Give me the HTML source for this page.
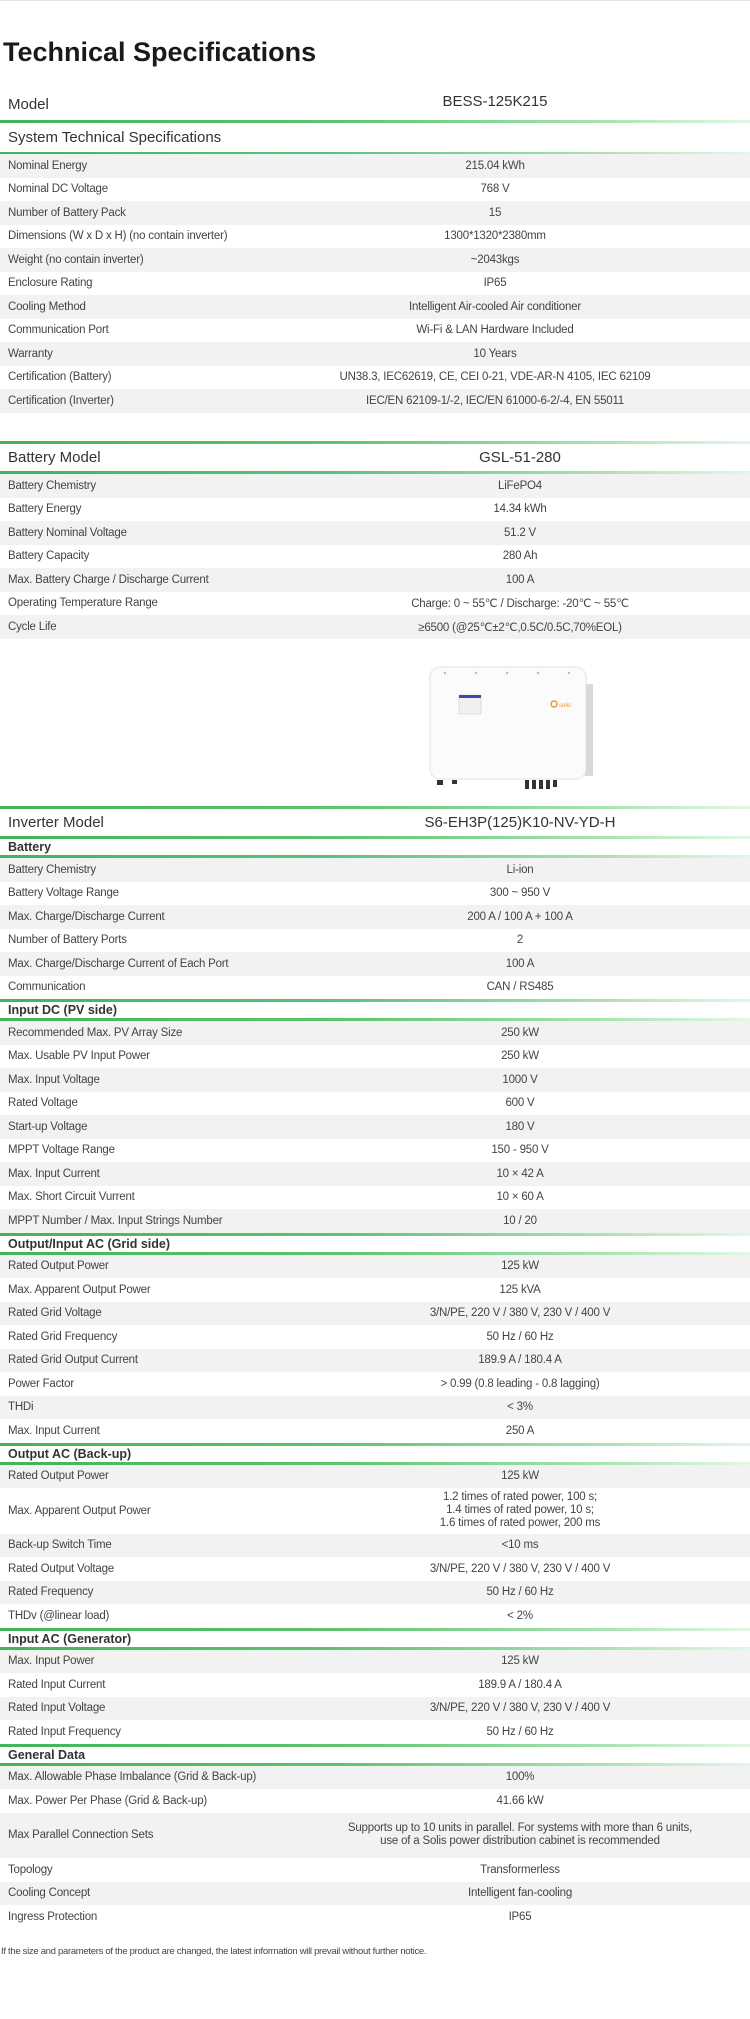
<!DOCTYPE html>
<html><head><meta charset="utf-8">
<style>
*{margin:0;padding:0;box-sizing:border-box}
body{width:750px;height:2019px;background:#fff;font-family:"Liberation Sans",Arial,sans-serif;color:#333;position:relative;overflow:hidden}
.topline{position:absolute;left:0;top:0;width:750px;height:1px;background:#e2e2e2}
h1{position:absolute;left:3px;top:37px;font-size:27px;font-weight:bold;color:#1a1a1a;letter-spacing:0}
.sec{position:absolute;left:0;width:750px}
.gl{height:3px;background:linear-gradient(to right,#45b35a 0%,#5cc46e 45%,#a8e3b0 80%,#e3f7e6 100%)}
.r{height:23.5px;display:flex;align-items:center;font-size:11.5px;color:#444;letter-spacing:-0.2px}
.r:nth-child(odd){background:#f2f2f2}
.r .l{padding-left:8px;width:290px;flex:none}
.r .v{flex:1;text-align:center;padding-right:0}
.s .r .l{width:262px}
.s .r .v{padding-right:22px}
.r.t{height:45.5px}
.r.t .v{line-height:13px}
.hb{height:16px;display:flex;align-items:center;padding-left:8px;font-size:12.5px;font-weight:bold;color:#333}
.hm{height:27px;display:flex;align-items:center;font-size:15px;color:#333}
.hm .l{padding-left:8px;width:290px}
.hm .v{flex:1;text-align:center}
.foot{position:absolute;left:1px;top:1946px;font-size:9.5px;color:#444;letter-spacing:-0.3px}
</style></head><body>
<div class="topline"></div>
<h1>Technical Specifications</h1>

<div class="sec" style="top:88px">
  <div class="hm" style="height:32px"><div class="l" style="width:262px">Model</div><div class="v" style="padding-right:22px;margin-top:-6px">BESS-125K215</div></div>
  <div class="gl"></div>
  <div class="hm" style="height:29px"><div class="l" style="width:300px">System Technical Specifications</div></div>
  <div class="gl"></div>
</div>
<div class="sec s" style="top:154px">
<div class="r"><div class="l">Nominal Energy</div><div class="v">215.04 kWh</div></div>
<div class="r"><div class="l">Nominal DC Voltage</div><div class="v">768 V</div></div>
<div class="r"><div class="l">Number of Battery Pack</div><div class="v">15</div></div>
<div class="r"><div class="l">Dimensions (W x D x H) (no contain inverter)</div><div class="v">1300*1320*2380mm</div></div>
<div class="r"><div class="l">Weight (no contain inverter)</div><div class="v">~2043kgs</div></div>
<div class="r"><div class="l">Enclosure Rating</div><div class="v">IP65</div></div>
<div class="r"><div class="l">Cooling Method</div><div class="v">Intelligent Air-cooled Air conditioner</div></div>
<div class="r"><div class="l">Communication Port</div><div class="v">Wi-Fi &amp; LAN Hardware Included</div></div>
<div class="r"><div class="l">Warranty</div><div class="v">10 Years</div></div>
<div class="r"><div class="l">Certification (Battery)</div><div class="v">UN38.3, IEC62619, CE, CEI 0-21, VDE-AR-N 4105, IEC 62109</div></div>
<div class="r"><div class="l">Certification (Inverter)</div><div class="v">IEC/EN 62109-1/-2, IEC/EN 61000-6-2/-4, EN 55011</div></div>
</div>

<div class="sec" style="top:441px">
  <div class="gl"></div>
  <div class="hm"><div class="l">Battery Model</div><div class="v">GSL-51-280</div></div>
  <div class="gl"></div>
  <div>
<div class="r"><div class="l">Battery Chemistry</div><div class="v">LiFePO4</div></div>
<div class="r"><div class="l">Battery Energy</div><div class="v">14.34 kWh</div></div>
<div class="r"><div class="l">Battery Nominal Voltage</div><div class="v">51.2 V</div></div>
<div class="r"><div class="l">Battery Capacity</div><div class="v">280 Ah</div></div>
<div class="r"><div class="l">Max. Battery Charge / Discharge Current</div><div class="v">100 A</div></div>
<div class="r"><div class="l">Operating Temperature Range</div><div class="v">Charge: 0 ~ 55℃ / Discharge: -20℃ ~ 55℃</div></div>
<div class="r"><div class="l">Cycle Life</div><div class="v">≥6500 (@25℃±2℃,0.5C/0.5C,70%EOL)</div></div>
  </div>
</div>

<svg style="position:absolute;left:425px;top:662px" width="175" height="135" viewBox="0 0 175 135">
  <rect x="160" y="22" width="8" height="92" fill="#d8d8d8"/>
  <rect x="5" y="5" width="156" height="112" rx="10" fill="#fbfbfb" stroke="#e2e2e2"/>
  <rect x="34" y="33" width="22" height="19" fill="#f0f0f0" stroke="#ccc" stroke-width="0.6"/>
  <rect x="34" y="33" width="22" height="3" fill="#3d4aa8"/>
  <circle cx="129" cy="42" r="3" fill="none" stroke="#e39a3a" stroke-width="1.4"/>
  <text x="134" y="45" font-size="6" fill="#e39a3a" font-family="Liberation Sans">solis</text>
  <g fill="#bbb"><circle cx="20" cy="11" r="1.2"/><circle cx="51" cy="11" r="1.2"/><circle cx="82" cy="11" r="1.2"/><circle cx="113" cy="11" r="1.2"/><circle cx="144" cy="11" r="1.2"/></g>
  <g fill="#333"><rect x="12" y="118" width="6" height="5"/><rect x="27" y="118" width="5" height="4"/><rect x="100" y="118" width="4" height="9"/><rect x="107" y="118" width="4" height="9"/><rect x="114" y="118" width="4" height="9"/><rect x="121" y="118" width="4" height="9"/><rect x="128" y="118" width="4" height="7"/></g>
</svg>

<div class="sec" style="top:806px">
  <div class="gl"></div>
  <div class="hm"><div class="l">Inverter Model</div><div class="v">S6-EH3P(125)K10-NV-YD-H</div></div>
  <div class="gl"></div>
  <div class="hb">Battery</div>
  <div class="gl"></div>
  <div>
<div class="r"><div class="l">Battery Chemistry</div><div class="v">Li-ion</div></div>
<div class="r"><div class="l">Battery Voltage Range</div><div class="v">300 ~ 950 V</div></div>
<div class="r"><div class="l">Max. Charge/Discharge Current</div><div class="v">200 A / 100 A + 100 A</div></div>
<div class="r"><div class="l">Number of Battery Ports</div><div class="v">2</div></div>
<div class="r"><div class="l">Max. Charge/Discharge Current of Each Port</div><div class="v">100 A</div></div>
<div class="r"><div class="l">Communication</div><div class="v">CAN / RS485</div></div>
  </div>
  <div class="gl"></div><div class="hb">Input DC (PV side)</div><div class="gl"></div>
  <div>
<div class="r"><div class="l">Recommended Max. PV Array Size</div><div class="v">250 kW</div></div>
<div class="r"><div class="l">Max. Usable PV Input Power</div><div class="v">250 kW</div></div>
<div class="r"><div class="l">Max. Input Voltage</div><div class="v">1000 V</div></div>
<div class="r"><div class="l">Rated Voltage</div><div class="v">600 V</div></div>
<div class="r"><div class="l">Start-up Voltage</div><div class="v">180 V</div></div>
<div class="r"><div class="l">MPPT Voltage Range</div><div class="v">150 - 950 V</div></div>
<div class="r"><div class="l">Max. Input Current</div><div class="v">10 × 42 A</div></div>
<div class="r"><div class="l">Max. Short Circuit Vurrent</div><div class="v">10 × 60 A</div></div>
<div class="r"><div class="l">MPPT Number / Max. Input Strings Number</div><div class="v">10 / 20</div></div>
  </div>
  <div class="gl"></div><div class="hb">Output/Input AC (Grid side)</div><div class="gl"></div>
  <div>
<div class="r"><div class="l">Rated Output Power</div><div class="v">125 kW</div></div>
<div class="r"><div class="l">Max. Apparent Output Power</div><div class="v">125 kVA</div></div>
<div class="r"><div class="l">Rated Grid Voltage</div><div class="v">3/N/PE, 220 V / 380 V, 230 V / 400 V</div></div>
<div class="r"><div class="l">Rated Grid Frequency</div><div class="v">50 Hz / 60 Hz</div></div>
<div class="r"><div class="l">Rated Grid Output Current</div><div class="v">189.9 A / 180.4 A</div></div>
<div class="r"><div class="l">Power Factor</div><div class="v">&gt; 0.99 (0.8 leading - 0.8 lagging)</div></div>
<div class="r"><div class="l">THDi</div><div class="v">&lt; 3%</div></div>
<div class="r"><div class="l">Max. Input Current</div><div class="v">250 A</div></div>
  </div>
  <div class="gl"></div><div class="hb">Output AC (Back-up)</div><div class="gl"></div>
  <div>
<div class="r"><div class="l">Rated Output Power</div><div class="v">125 kW</div></div>
<div class="r t"><div class="l">Max. Apparent Output Power</div><div class="v">1.2 times of rated power, 100 s;<br>1.4 times of rated power, 10 s;<br>1.6 times of rated power, 200 ms</div></div>
<div class="r"><div class="l">Back-up Switch Time</div><div class="v">&lt;10 ms</div></div>
<div class="r"><div class="l">Rated Output Voltage</div><div class="v">3/N/PE, 220 V / 380 V, 230 V / 400 V</div></div>
<div class="r"><div class="l">Rated Frequency</div><div class="v">50 Hz / 60 Hz</div></div>
<div class="r"><div class="l">THDv (@linear load)</div><div class="v">&lt; 2%</div></div>
  </div>
  <div class="gl"></div><div class="hb">Input AC (Generator)</div><div class="gl"></div>
  <div>
<div class="r"><div class="l">Max. Input Power</div><div class="v">125 kW</div></div>
<div class="r"><div class="l">Rated Input Current</div><div class="v">189.9 A / 180.4 A</div></div>
<div class="r"><div class="l">Rated Input Voltage</div><div class="v">3/N/PE, 220 V / 380 V, 230 V / 400 V</div></div>
<div class="r"><div class="l">Rated Input Frequency</div><div class="v">50 Hz / 60 Hz</div></div>
  </div>
  <div class="gl"></div><div class="hb">General Data</div><div class="gl"></div>
  <div>
<div class="r"><div class="l">Max. Allowable Phase Imbalance (Grid &amp; Back-up)</div><div class="v">100%</div></div>
<div class="r"><div class="l">Max. Power Per Phase (Grid &amp; Back-up)</div><div class="v">41.66 kW</div></div>
<div class="r t"><div class="l">Max Parallel Connection Sets</div><div class="v">Supports up to 10 units in parallel. For systems with more than 6 units,<br>use of a Solis power distribution cabinet is recommended</div></div>
<div class="r"><div class="l">Topology</div><div class="v">Transformerless</div></div>
<div class="r"><div class="l">Cooling Concept</div><div class="v">Intelligent fan-cooling</div></div>
<div class="r"><div class="l">Ingress Protection</div><div class="v">IP65</div></div>
  </div>
</div>
<div class="foot">If the size and parameters of the product are changed, the latest information will prevail without further notice.</div>
</body></html>
